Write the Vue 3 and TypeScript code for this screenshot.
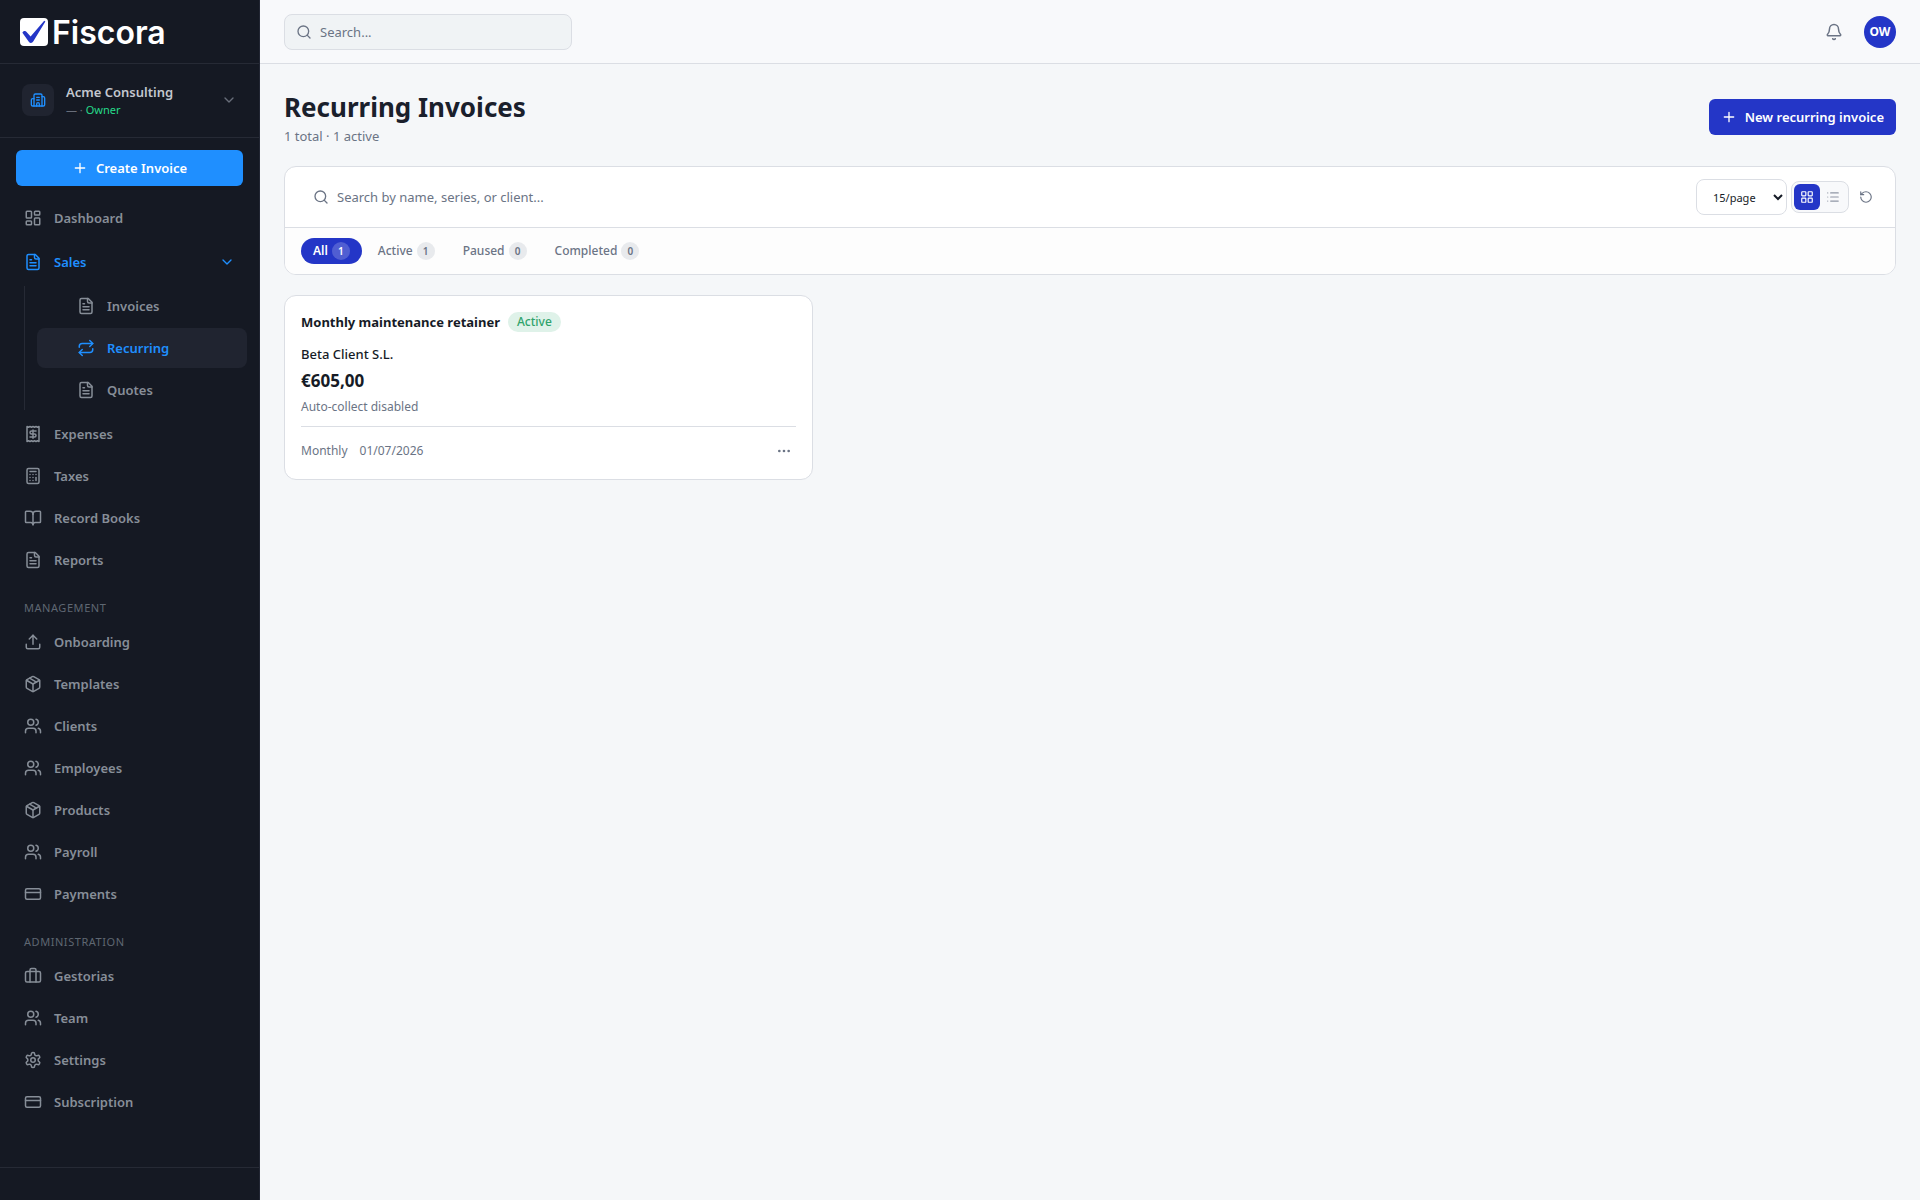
<script setup lang="ts">
import { ref } from 'vue'

type Shape = { tag: string; attrs: Record<string, string | number> }
const p = (d: string): Shape => ({ tag: 'path', attrs: { d } })
const r = (x: number, y: number, width: number, height: number, rx: number): Shape => ({
  tag: 'rect',
  attrs: { x, y, width, height, rx },
})
const c = (cx: number, cy: number, rad: number): Shape => ({ tag: 'circle', attrs: { cx, cy, r: rad } })

const icons: Record<string, Shape[]> = {
  dashboard: [r(3, 3, 7, 9, 1), r(14, 3, 7, 5, 1), r(14, 12, 7, 9, 1), r(3, 16, 7, 5, 1)],
  file: [
    p('M15 2H6a2 2 0 0 0-2 2v16a2 2 0 0 0 2 2h12a2 2 0 0 0 2-2V7Z'),
    p('M14 2v4a2 2 0 0 0 2 2h4'),
    p('M10 9H8'),
    p('M16 13H8'),
    p('M16 17H8'),
  ],
  repeat: [p('m17 2 4 4-4 4'), p('M3 11v-1a4 4 0 0 1 4-4h14'), p('m7 22-4-4 4-4'), p('M21 13v1a4 4 0 0 1-4 4H3')],
  receipt: [
    p('M4 2v20l2-1 2 1 2-1 2 1 2-1 2 1 2-1 2 1V2l-2 1-2-1-2 1-2-1-2 1-2-1-2 1Z'),
    p('M16 8h-6a2 2 0 1 0 0 4h4a2 2 0 1 1 0 4H8'),
    p('M12 17.5v-11'),
  ],
  calculator: [
    r(4, 2, 16, 20, 2),
    p('M8 6h8'),
    p('M16 14v4'),
    p('M16 10h.01'),
    p('M12 10h.01'),
    p('M8 10h.01'),
    p('M12 14h.01'),
    p('M8 14h.01'),
    p('M12 18h.01'),
    p('M8 18h.01'),
  ],
  book: [
    p('M12 7v14'),
    p('M3 18a1 1 0 0 1-1-1V4a1 1 0 0 1 1-1h5a4 4 0 0 1 4 4 4 4 0 0 1 4-4h5a1 1 0 0 1 1 1v13a1 1 0 0 1-1 1h-6a3 3 0 0 0-3 3 3 3 0 0 0-3-3z'),
  ],
  upload: [p('M21 15v4a2 2 0 0 1-2 2H5a2 2 0 0 1-2-2v-4'), p('m17 8-5-5-5 5'), p('M12 3v12')],
  package: [
    p('m7.5 4.27 9 5.15'),
    p('M21 8a2 2 0 0 0-1-1.73l-7-4a2 2 0 0 0-2 0l-7 4A2 2 0 0 0 3 8v8a2 2 0 0 0 1 1.73l7 4a2 2 0 0 0 2 0l7-4A2 2 0 0 0 21 16Z'),
    p('m3.3 7 8.7 5 8.7-5'),
    p('M12 22V12'),
  ],
  users: [
    p('M16 21v-2a4 4 0 0 0-4-4H6a4 4 0 0 0-4 4v2'),
    c(9, 7, 4),
    p('M22 21v-2a4 4 0 0 0-3-3.87'),
    p('M16 3.13a4 4 0 0 1 0 7.75'),
  ],
  card: [r(2, 5, 20, 14, 2), p('M2 10h20')],
  briefcase: [
    p('M16 20V4a2 2 0 0 0-2-2h-4a2 2 0 0 0-2 2v16'),
    r(2, 6, 20, 14, 2),
  ],
  settings: [
    p('M12.22 2h-.44a2 2 0 0 0-2 2v.18a2 2 0 0 1-1 1.73l-.43.25a2 2 0 0 1-2 0l-.15-.08a2 2 0 0 0-2.73.73l-.22.38a2 2 0 0 0 .73 2.73l.15.1a2 2 0 0 1 1 1.72v.51a2 2 0 0 1-1 1.74l-.15.09a2 2 0 0 0-.73 2.73l.22.38a2 2 0 0 0 2.73.73l.15-.08a2 2 0 0 1 2 0l.43.25a2 2 0 0 1 1 1.73V20a2 2 0 0 0 2 2h.44a2 2 0 0 0 2-2v-.18a2 2 0 0 1 1-1.73l.43-.25a2 2 0 0 1 2 0l.15.08a2 2 0 0 0 2.73-.73l.22-.39a2 2 0 0 0-.73-2.73l-.15-.08a2 2 0 0 1-1-1.74v-.5a2 2 0 0 1 1-1.74l.15-.09a2 2 0 0 0 .73-2.73l-.22-.38a2 2 0 0 0-2.73-.73l-.15.08a2 2 0 0 1-2 0l-.43-.25a2 2 0 0 1-1-1.73V4a2 2 0 0 0-2-2z'),
    c(12, 12, 3),
  ],
}

type Item = { label: string; icon: string }
const salesItems: Item[] = [
  { label: 'Invoices', icon: 'file' },
  { label: 'Recurring', icon: 'repeat' },
  { label: 'Quotes', icon: 'file' },
]
const financeItems: Item[] = [
  { label: 'Expenses', icon: 'receipt' },
  { label: 'Taxes', icon: 'calculator' },
  { label: 'Record Books', icon: 'book' },
  { label: 'Reports', icon: 'file' },
]
const sections: { title: string; items: Item[] }[] = [
  {
    title: 'Management',
    items: [
      { label: 'Onboarding', icon: 'upload' },
      { label: 'Templates', icon: 'package' },
      { label: 'Clients', icon: 'users' },
      { label: 'Employees', icon: 'users' },
      { label: 'Products', icon: 'package' },
      { label: 'Payroll', icon: 'users' },
      { label: 'Payments', icon: 'card' },
    ],
  },
  {
    title: 'Administration',
    items: [
      { label: 'Gestorias', icon: 'briefcase' },
      { label: 'Team', icon: 'users' },
      { label: 'Settings', icon: 'settings' },
      { label: 'Subscription', icon: 'card' },
    ],
  },
]

const tabs = [
  { label: 'All', count: 1 },
  { label: 'Active', count: 1 },
  { label: 'Paused', count: 0 },
  { label: 'Completed', count: 0 },
]
const activeTab = ref('All')
const view = ref<'grid' | 'list'>('grid')
const pageSize = ref('15')
const globalSearch = ref('')
const search = ref('')
const salesOpen = ref(true)
</script>

<template>
  <div class="app">
    <aside class="sidebar">
      <div class="brand">
        <svg class="brand-mark" viewBox="0 0 28 28" aria-hidden="true">
          <rect width="28" height="28" rx="4" fill="#fff" />
          <path d="M2.400 14.800C3.200 12.600 5.600 12.600 6.800 14.200L10.600 18.600L24.200 2.800L25.400 3.600L13.200 23.600C12.200 25.400 10 25.400 8.800 23.800Z" fill="#2436c7" />
        </svg>
        <span class="brand-name">Fiscora</span>
      </div>

      <button class="account" type="button">
        <span class="account-icon">
          <svg class="icon" viewBox="0 0 24 24" aria-hidden="true">
            <path d="M10 12h4M10 8h4M14 21v-3a2 2 0 0 0-4 0v3" />
            <path d="M6 10H4a2 2 0 0 0-2 2v7a2 2 0 0 0 2 2h16a2 2 0 0 0 2-2V9a2 2 0 0 0-2-2h-2" />
            <path d="M6 21V5a2 2 0 0 1 2-2h8a2 2 0 0 1 2 2v16" />
          </svg>
        </span>
        <span class="account-text">
          <span class="account-name">Acme Consulting</span>
          <span class="account-role">— · <span class="role">Owner</span></span>
        </span>
        <svg class="icon chevron" viewBox="0 0 24 24" aria-hidden="true"><path d="m6 9 6 6 6-6" /></svg>
      </button>

      <div class="create-wrap">
        <button class="create" type="button">
          <svg class="icon" viewBox="0 0 24 24" aria-hidden="true"><path d="M5 12h14M12 5v14" /></svg>
          Create Invoice
        </button>
      </div>

      <nav class="nav" aria-label="Main">
        <a class="nav-item" href="#">
          <svg class="icon nav-icon" viewBox="0 0 24 24" aria-hidden="true">
            <component :is="s.tag" v-for="(s, i) in icons.dashboard" :key="i" v-bind="s.attrs" />
          </svg>
          Dashboard
        </a>
        <div class="group">
          <button class="nav-item current" type="button" :aria-expanded="salesOpen" @click="salesOpen = !salesOpen">
            <svg class="icon nav-icon" viewBox="0 0 24 24" aria-hidden="true">
              <component :is="s.tag" v-for="(s, i) in icons.file" :key="i" v-bind="s.attrs" />
            </svg>
            Sales
            <svg class="icon chevron" viewBox="0 0 24 24" aria-hidden="true"><path d="m6 9 6 6 6-6" /></svg>
          </button>
          <div v-if="salesOpen" class="subnav">
            <a
              v-for="item in salesItems"
              :key="item.label"
              class="nav-item"
              :class="{ current: item.label === 'Recurring', selected: item.label === 'Recurring' }"
              href="#"
            >
              <svg class="icon nav-icon" viewBox="0 0 24 24" aria-hidden="true">
                <component :is="s.tag" v-for="(s, i) in icons[item.icon]" :key="i" v-bind="s.attrs" />
              </svg>
              {{ item.label }}
            </a>
          </div>
        </div>
        <a v-for="item in financeItems" :key="item.label" class="nav-item" href="#">
          <svg class="icon nav-icon" viewBox="0 0 24 24" aria-hidden="true">
            <component :is="s.tag" v-for="(s, i) in icons[item.icon]" :key="i" v-bind="s.attrs" />
          </svg>
          {{ item.label }}
        </a>
        <template v-for="section in sections" :key="section.title">
          <h2 class="section-title">{{ section.title }}</h2>
          <a v-for="item in section.items" :key="item.label" class="nav-item" href="#">
            <svg class="icon nav-icon" viewBox="0 0 24 24" aria-hidden="true">
              <component :is="s.tag" v-for="(s, i) in icons[item.icon]" :key="i" v-bind="s.attrs" />
            </svg>
            {{ item.label }}
          </a>
        </template>
      </nav>
      <div class="sidebar-foot"></div>
    </aside>

    <div class="content">
      <header class="topbar">
        <label class="search-box">
          <svg class="icon" viewBox="0 0 24 24" aria-hidden="true"><circle cx="11" cy="11" r="8" /><path d="m21 21-4.300-4.300" /></svg>
          <input v-model="globalSearch" type="text" placeholder="Search..." aria-label="Search" />
        </label>
        <div class="top-actions">
          <button class="bell" type="button" aria-label="Notifications">
            <svg class="icon" viewBox="0 0 24 24" aria-hidden="true">
              <path d="M10.268 21a2 2 0 0 0 3.464 0" />
              <path d="M3.262 15.326A1 1 0 0 0 4 17h16a1 1 0 0 0 .74-1.673C19.410 13.956 18 12.499 18 8A6 6 0 0 0 6 8c0 4.499-1.411 5.956-2.738 7.326" />
            </svg>
          </button>
          <button class="avatar" type="button">OW</button>
        </div>
      </header>

      <main class="main">
        <div class="page-head">
          <div>
            <h1>Recurring Invoices</h1>
            <p class="subtitle">1 total · 1 active</p>
          </div>
          <button class="new-button" type="button">
            <svg class="icon" viewBox="0 0 24 24" aria-hidden="true"><path d="M5 12h14M12 5v14" /></svg>
            New recurring invoice
          </button>
        </div>

        <section class="panel">
          <div class="toolbar">
            <label class="filter">
              <svg class="icon" viewBox="0 0 24 24" aria-hidden="true"><circle cx="11" cy="11" r="8" /><path d="m21 21-4.300-4.300" /></svg>
              <input v-model="search" type="text" placeholder="Search by name, series, or client..." aria-label="Search recurring invoices" />
            </label>
            <div class="tools">
              <select v-model="pageSize" class="page-size" aria-label="Items per page">
                <option value="15">15/page</option>
                <option value="30">30/page</option>
                <option value="50">50/page</option>
              </select>
              <div class="toggle">
                <button type="button" :class="{ on: view === 'grid' }" aria-label="Grid view" @click="view = 'grid'">
                  <svg class="icon" viewBox="0 0 24 24" aria-hidden="true">
                    <rect x="3" y="3" width="7" height="7" rx="1" /><rect x="14" y="3" width="7" height="7" rx="1" />
                    <rect x="14" y="14" width="7" height="7" rx="1" /><rect x="3" y="14" width="7" height="7" rx="1" />
                  </svg>
                </button>
                <button type="button" :class="{ on: view === 'list' }" aria-label="List view" @click="view = 'list'">
                  <svg class="icon" viewBox="0 0 24 24" aria-hidden="true">
                    <path d="M3 5h.01M3 12h.01M3 19h.01M8 5h13M8 12h13M8 19h13" />
                  </svg>
                </button>
              </div>
              <button class="refresh" type="button" aria-label="Refresh">
                <svg class="icon" viewBox="0 0 24 24" aria-hidden="true">
                  <path d="M3 12a9 9 0 1 0 9-9 9.750 9.750 0 0 0-6.740 2.740L3 8" /><path d="M3 3v5h5" />
                </svg>
              </button>
            </div>
          </div>
          <div class="tabs">
            <button
              v-for="tab in tabs"
              :key="tab.label"
              type="button"
              class="tab"
              :class="{ active: activeTab === tab.label }"
              @click="activeTab = tab.label"
            >
              {{ tab.label }}<span class="count">{{ tab.count }}</span>
            </button>
          </div>
        </section>

        <div class="cards">
          <article class="card">
            <div class="card-head">
              <h3>Monthly maintenance retainer</h3>
              <span class="badge">Active</span>
            </div>
            <p class="client">Beta Client S.L.</p>
            <p class="amount">€605,00</p>
            <p class="note">Auto-collect disabled</p>
            <div class="card-foot">
              <span>Monthly</span>
              <span>01/07/2026</span>
              <button class="more" type="button" aria-label="More actions">
                <svg class="icon" viewBox="0 0 24 24" aria-hidden="true">
                  <circle cx="5" cy="12" r="1" /><circle cx="12" cy="12" r="1" /><circle cx="19" cy="12" r="1" />
                </svg>
              </button>
            </div>
          </article>
        </div>
      </main>
    </div>
  </div>
</template>

<style>
body {
  background: #f5f7f9;
}
</style>

<style scoped>
.app {
  display: flex;
  min-height: 100vh;
  font-family: 'Segoe UI', 'Noto Sans', sans-serif;
  font-size: 13px;
  line-height: 20px;
  color: #161b26;
}
*,
*::before,
*::after {
  box-sizing: border-box;
}
button,
input,
select {
  font: inherit;
  color: inherit;
  border: 0;
  background: none;
  padding: 0;
  margin: 0;
}
button {
  cursor: pointer;
}
h1,
h2,
h3,
p {
  margin: 0;
}
a {
  color: inherit;
  text-decoration: none;
}
.icon {
  width: 16px;
  height: 16px;
  flex: none;
  fill: none;
  stroke: currentColor;
  stroke-width: 2;
  stroke-linecap: round;
  stroke-linejoin: round;
}
.sidebar {
  flex: none;
  display: flex;
  flex-direction: column;
  width: 260px;
  background: #151923;
  border-right: 1px solid #222633;
  color: #878e98;
}
.brand {
  display: flex;
  align-items: center;
  gap: 4px;
  height: 64px;
  padding: 0 20px;
  border-bottom: 1px solid #262a35;
}
.brand-mark {
  width: 28px;
  height: 28px;
}
.brand-name {
  padding-top: 2px;
  font-family: Inter, sans-serif;
  font-size: 32px;
  line-height: 32px;
  font-weight: 600;
  color: #fff;
}
.account {
  display: flex;
  align-items: center;
  gap: 12px;
  height: 74px;
  padding: 0 22px 1px;
  border-bottom: 1px solid #262a35;
  text-align: left;
  color: #686e7a;
}
.account-icon {
  display: grid;
  place-items: center;
  width: 32px;
  height: 32px;
  border-radius: 8px;
  background: #202430;
  color: #1f8fff;
}
.account-text {
  display: flex;
  flex-direction: column;
}
.account-name {
  font-weight: 600;
  color: #c3c7cf;
}
.account-role {
  font-size: 11px;
  line-height: 16px;
}
.role {
  color: #26d98a;
}
.chevron {
  margin-left: auto;
}
.create-wrap {
  padding: 12px 16px;
}
.create {
  display: flex;
  align-items: center;
  justify-content: center;
  gap: 8px;
  width: 100%;
  height: 36px;
  border-radius: 6px;
  background: #1f8fff;
  color: #fff;
  font-weight: 600;
}
.nav {
  display: flex;
  flex-direction: column;
  gap: 2px;
  padding: 0 12px;
}
.nav-item {
  display: flex;
  align-items: center;
  gap: 12px;
  width: 100%;
  height: 40px;
  padding: 0 12px;
  border-radius: 8px;
  font-weight: 600;
}
.nav-icon {
  width: 18px;
  height: 18px;
}
.current {
  color: #1f8fff;
}
.selected {
  background: #202430;
}
.group {
  margin: 2px 0;
}
.subnav {
  display: flex;
  flex-direction: column;
  gap: 2px;
  margin: 4px 0 0 12px;
  padding-left: 12px;
  border-left: 1px solid #262a35;
}
.subnav .nav-item {
  padding-left: 40px;
}
.section-title {
  padding: 18px 12px 4px;
  font-size: 11px;
  line-height: 16px;
  font-weight: 400;
  letter-spacing: 0.05em;
  text-transform: uppercase;
  color: #5f6772;
}
.sidebar-foot {
  height: 33px;
  margin-top: auto;
  border-top: 1px solid #262a35;
}
.content {
  flex: 1;
  min-width: 0;
  background: #f5f7f9;
}
.topbar {
  display: flex;
  align-items: center;
  justify-content: space-between;
  height: 64px;
  padding: 0 24px;
  background: #f8f9fb;
  border-bottom: 1px solid #dbdee4;
}
.search-box {
  display: flex;
  align-items: center;
  gap: 8px;
  width: 288px;
  height: 36px;
  padding: 0 11px;
  border: 1px solid #dbdee4;
  border-radius: 8px;
  background: #f0f3f5;
  color: #6b7485;
}
input {
  flex: 1;
  min-width: 0;
  outline: 0;
}
input::placeholder {
  color: #6b7485;
  opacity: 1;
}
.top-actions {
  display: flex;
  align-items: center;
  gap: 12px;
  color: #6b7485;
}
.bell {
  display: grid;
  place-items: center;
  width: 36px;
  height: 36px;
}
.bell .icon {
  width: 18px;
  height: 18px;
}
.avatar {
  width: 32px;
  height: 32px;
  border-radius: 50%;
  background: #2436c7;
  color: #fff;
  font-size: 12px;
  font-weight: 700;
}
.main {
  padding: 24px;
}
.page-head {
  display: flex;
  align-items: center;
  justify-content: space-between;
  margin-bottom: 20px;
}
h1 {
  font-size: 26px;
  line-height: 38px;
  font-weight: 700;
  color: #1a202c;
}
.subtitle {
  color: #6b7485;
}
.new-button {
  display: flex;
  align-items: center;
  gap: 8px;
  height: 36px;
  padding: 0 12px;
  border-radius: 6px;
  background: #2436c7;
  color: #fff;
  font-weight: 600;
}
.panel {
  overflow: hidden;
  border: 1px solid #dbdee4;
  border-radius: 12px;
  background: #fff;
}
.toolbar {
  display: flex;
  align-items: center;
  gap: 16px;
  height: 60px;
  padding: 0 16px;
}
.filter {
  flex: 1;
  display: flex;
  align-items: center;
  gap: 8px;
  padding: 0 12px;
  color: #6b7485;
}
.tools {
  display: flex;
  align-items: center;
  gap: 4px;
}
.page-size {
  width: 91px;
  height: 36px;
  padding: 0 0 0 12px;
  border: 1px solid #dbdee4;
  border-radius: 8px;
  background: #fff;
  font-size: 11px;
}
.toggle {
  display: flex;
  padding: 2px;
  border: 1px solid #dbdee4;
  border-radius: 8px;
  background: #f8f9fb;
}
.toggle button {
  display: grid;
  place-items: center;
  width: 26px;
  height: 26px;
  border-radius: 6px;
  color: #8f96a5;
}
.toggle .icon,
.refresh .icon {
  width: 14px;
  height: 14px;
}
.toggle .on {
  background: #2436c7;
  color: #fff;
}
.refresh {
  display: grid;
  place-items: center;
  width: 26px;
  height: 26px;
  color: #6b7485;
}
.tabs {
  display: flex;
  align-items: center;
  gap: 4px;
  height: 47px;
  padding: 0 16px;
  border-top: 1px solid #dbdee4;
  background: #fdfdfd;
}
.tab {
  display: flex;
  align-items: center;
  gap: 4px;
  height: 26px;
  padding: 0 12px;
  border-radius: 13px;
  font-size: 12px;
  font-weight: 500;
  color: #6b7485;
}
.count {
  display: grid;
  place-items: center;
  width: 18px;
  height: 18px;
  border-radius: 50%;
  background: #e8eaed;
  font-size: 10px;
  line-height: 18px;
  font-weight: 600;
}
.active {
  background: #2436c7;
  color: #fff;
  font-weight: 600;
}
.active .count {
  background: #505ed2;
}
.cards {
  display: grid;
  grid-template-columns: repeat(3, 1fr);
  gap: 12px;
  margin-top: 20px;
}
.card {
  padding: 16px;
  border: 1px solid #dbdee4;
  border-radius: 12px;
  background: #fff;
}
.card-head {
  display: flex;
  align-items: center;
  gap: 8px;
}
h3 {
  font-size: 13px;
  line-height: 20px;
  font-weight: 700;
}
.badge {
  padding: 2px 9px;
  border-radius: 10px;
  background: #dff2e9;
  color: #2fa36b;
  font-size: 12px;
  line-height: 16px;
  font-weight: 500;
}
.client {
  margin-top: 12px;
  font-weight: 500;
}
.amount {
  margin-top: 5px;
  font-size: 17px;
  line-height: 24px;
  font-weight: 700;
}
.note {
  margin-top: 4px;
  font-size: 12px;
  color: #6b7485;
}
.card-foot {
  display: flex;
  align-items: center;
  gap: 12px;
  margin-top: 9px;
  padding-top: 12px;
  border-top: 1px solid #dbdee4;
  font-size: 12px;
  color: #6b7485;
}
.more {
  display: grid;
  place-items: center;
  width: 24px;
  height: 24px;
  margin-left: auto;
}
</style>
